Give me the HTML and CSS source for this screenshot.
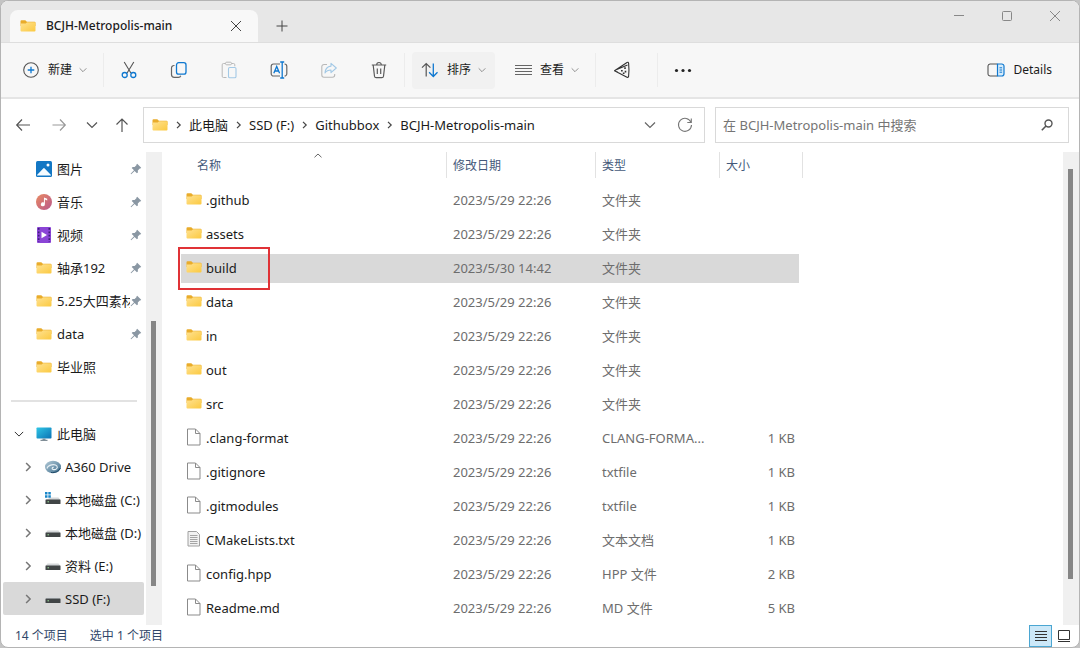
FILE: index.html
```html
<!DOCTYPE html>
<html lang="zh-CN">
<head>
    <meta charset="UTF-8">
    <meta name="viewport" content="width=device-width, initial-scale=1.0">
    <title>BCJH-Metropolis-main</title>
    <link rel="stylesheet" href="styles.css">
</head>
<body>
<!-- 公用图标 -->
<svg class="sprite" aria-hidden="true">
    <defs>
        <linearGradient id="gFolder" x1="0" y1="0" x2="1" y2="1">
            <stop offset="0" stop-color="#ffe292"/>
            <stop offset="1" stop-color="#fbc940"/>
        </linearGradient>
        <linearGradient id="gScreen" x1="0" y1="0" x2="1" y2="1">
            <stop offset="0" stop-color="#2fc6e6"/>
            <stop offset="1" stop-color="#0a72b4"/>
        </linearGradient>
        <linearGradient id="gMusic" x1="0" y1="0" x2="1" y2="1">
            <stop offset="0" stop-color="#e98a62"/>
            <stop offset="1" stop-color="#b9588c"/>
        </linearGradient>
        <linearGradient id="gDrive" x1="0" y1="0" x2="1" y2="1">
            <stop offset="0" stop-color="#b4cbd8"/>
            <stop offset="1" stop-color="#3c6c8c"/>
        </linearGradient>
    </defs>
    <symbol id="folder" viewBox="0 0 16 16">
        <path d="M.5 3.300a1 1 0 0 1 1-1h3.800l1.600 1.500h7.600a1 1 0 0 1 1 1V8H.5z" fill="#e9ac2b"/>
        <path d="M.5 5.600h5.200l1.400-1.300h7.400a1 1 0 0 1 1 1v7.200a1 1 0 0 1-1 1h-13a1 1 0 0 1-1-1z" fill="url(#gFolder)"/>
    </symbol>
    <symbol id="file" viewBox="0 0 16 18">
        <path d="M1.500 1h8L14 5.500V17H1.500z" fill="#fff" stroke="#8b8b8b"/>
        <path d="M9.500 1v4.500H14" fill="none" stroke="#8b8b8b"/>
    </symbol>
    <symbol id="text" viewBox="0 0 16 18">
        <path d="M2 1.500h8.500l3 3v11.500H2z" fill="#f1f1f1" stroke="#a0a0a0"/>
        <path d="M4 5.500h7.500M4 7.500h7.500M4 9.500h7.500M4 11.500h7.500M4 13.500h7.500" stroke="#909090" stroke-width=".8"/>
    </symbol>
    <symbol id="pin" viewBox="0 0 12 12">
        <path d="M7.200.8l4 4-.8.8-.6-.1-2 2 .1 1.900-1 .9-2.300-2.300L1.200 11.200.7 11l.1-.4 3.200-3.400L1.700 4.900l1-1 1.900.1 2-2-.2-.5z" fill="#8a97a3"/>
    </symbol>
    <symbol id="right" viewBox="0 0 8 8"><path d="M2.500.8L5.700 4 2.500 7.200" fill="none" stroke="currentColor" stroke-width="1.200"/></symbol>
    <symbol id="down" viewBox="0 0 12 12"><path d="M1 3.500l5 5 5-5" fill="none" stroke="currentColor" stroke-width="1.200"/></symbol>
    <symbol id="cross" viewBox="0 0 12 12"><path d="M1 1l10 10M11 1L1 11" fill="none" stroke="currentColor"/></symbol>
    <symbol id="disk" viewBox="0 0 16 16">
        <path d="M2.500 5.500h11L15.500 8H.5z" fill="#d5d8da"/>
        <rect x=".5" y="7.500" width="15" height="4.500" rx=".5" fill="#414546"/>
        <path d="M2.500 9.800h1.500" stroke="#9ce29a"/>
    </symbol>
</svg>

<div class="window">
    <!-- 标题栏 -->
    <header class="titlebar">
        <div class="tab">
            <svg class="icon"><use href="#folder"/></svg>
            <span class="tab-name">BCJH-Metropolis-main</span>
            <button class="tab-close" aria-label="关闭标签页"><svg class="icon-s"><use href="#cross"/></svg></button>
        </div>
        <button class="tab-add" aria-label="新建标签页">
            <svg class="icon-s" viewBox="0 0 12 12"><path d="M6 .5v11M.5 6h11" stroke="currentColor"/></svg>
        </button>
        <div class="win-btns">
            <button aria-label="最小化"><svg class="icon-s" viewBox="0 0 12 12"><path d="M1 5.500h10" stroke="currentColor"/></svg></button>
            <button aria-label="最大化"><svg class="icon-s" viewBox="0 0 12 12"><rect x="1.500" y="1.500" width="9" height="9" rx="1" fill="none" stroke="currentColor"/></svg></button>
            <button aria-label="关闭"><svg class="icon-s"><use href="#cross"/></svg></button>
        </div>
    </header>

    <!-- 工具栏 -->
    <div class="toolbar">
        <button class="tool new">
            <svg class="icon-l" viewBox="0 0 18 18" fill="none"><circle cx="9" cy="9" r="7.300" stroke="#555" stroke-width="1.100"/><path d="M9 5.700v6.600M5.700 9h6.600" stroke="#0f78d0" stroke-width="1.300"/></svg>
            <span>新建</span>
            <svg class="chev"><use href="#down"/></svg>
        </button>
        <i class="line"></i>
        <button class="tool only" aria-label="剪切">
            <svg class="icon-l" viewBox="0 0 18 18" fill="none"><path d="M4.200 1l6.700 11M13.800 1L7.100 12" stroke="#555" stroke-width="1.100"/><circle cx="4.700" cy="14" r="2.500" stroke="#0f78d0" stroke-width="1.300"/><circle cx="13.300" cy="14" r="2.500" stroke="#0f78d0" stroke-width="1.300"/></svg>
        </button>
        <button class="tool only" aria-label="复制">
            <svg class="icon-l" viewBox="0 0 18 18" fill="none"><path d="M4.500 4.500H4A2.500 2.500 0 0 0 1.500 7v6.500A2.800 2.800 0 0 0 4.300 16.300h4.200a2.500 2.500 0 0 0 2.300-1.600" stroke="#666" stroke-width="1.200"/><rect x="6.500" y="1.700" width="9.500" height="11.500" rx="2.200" stroke="#0f78d0" stroke-width="1.300"/></svg>
        </button>
        <button class="tool only" aria-label="粘贴" disabled>
            <svg class="icon-l" viewBox="0 0 18 18" fill="none"><path d="M5.500 2.500h-2a1.300 1.300 0 0 0-1.300 1.300v11.400a1.300 1.300 0 0 0 1.300 1.300h3M11.500 2.500h2a1.300 1.300 0 0 1 1.300 1.300v1.500" stroke="#b8b8b8"/><rect x="5.500" y="1.200" width="6" height="2.600" rx="1.200" stroke="#b8b8b8"/><rect x="8.500" y="6.500" width="7.500" height="10.200" rx="1.300" stroke="#a3c9e6" stroke-width="1.100"/></svg>
        </button>
        <button class="tool only" aria-label="重命名">
            <svg class="icon-l" viewBox="0 0 18 18" fill="none"><path d="M10 3H3.500A2.300 2.300 0 0 0 1.200 5.300v7.400A2.300 2.300 0 0 0 3.500 15H10M14.500 3a2.300 2.300 0 0 1 2.300 2.300v7.400a2.300 2.300 0 0 1-2.300 2.300" stroke="#666" stroke-width="1.200"/><path d="M10.200 1h4M10.200 17h4M12.200 1v16M3.800 12.300L6.700 5.500l2.900 6.800M4.800 10h3.800" stroke="#0f78d0" stroke-width="1.300"/></svg>
        </button>
        <button class="tool only" aria-label="共享" disabled>
            <svg class="icon-l" viewBox="0 0 18 18" fill="none"><path d="M7 3.500H4A2.200 2.200 0 0 0 1.800 5.700V14A2.200 2.200 0 0 0 4 16.200h8.500a2.200 2.200 0 0 0 2.200-2.200v-1" stroke="#b8b8b8" stroke-width="1.100"/><path d="M11 2.300l5.300 4.700L11 11.600V9c-2.800 0-4.600.8-6 3 .2-3.800 2.300-6.500 6-6.900z" stroke="#a3c9e6" stroke-width="1.100" stroke-linejoin="round"/></svg>
        </button>
        <button class="tool only" aria-label="删除">
            <svg class="icon-l" viewBox="0 0 18 18" fill="none" stroke="#5a5a5a" stroke-width="1.200"><path d="M1.800 4h14.400M6.700 3.800a2.300 2.300 0 0 1 4.600 0M3.200 4.200l1.300 11a1.700 1.700 0 0 0 1.700 1.500h5.600a1.700 1.700 0 0 0 1.700-1.500l1.300-11M7.300 7.500v5.500M10.700 7.500v5.500"/></svg>
        </button>
        <i class="line"></i>
        <button class="tool sort">
            <svg class="icon-l" viewBox="0 0 18 18" fill="none"><path d="M5.200 15.500V2.500M1 6.700l4.200-4.200 4.200 4.200" stroke="#555" stroke-width="1.200"/><path d="M12.300 2.500v13M8.100 11.300l4.200 4.200 4.200-4.200" stroke="#0f78d0" stroke-width="1.300"/></svg>
            <span>排序</span>
            <svg class="chev"><use href="#down"/></svg>
        </button>
        <button class="tool view">
            <svg class="icon-l" viewBox="0 0 18 18"><path d="M1 4.500h17M1 7.500h17M1 10.500h17M1 13.500h17" stroke="#666"/></svg>
            <span>查看</span>
            <svg class="chev"><use href="#down"/></svg>
        </button>
        <i class="line"></i>
        <button class="tool only pizza" aria-label="Pizza">
            <svg class="icon-l" viewBox="0 0 18 18" fill="none" stroke="#333" stroke-width="1.100" stroke-linejoin="round"><path d="M1.500 9.800L14 1.500q1.300-.7 1.600.6.700 6.500 0 13.200-.3 1.400-1.600 1zM3.200 8.700L14.500 4M3.500 10.500l1.500 1"/><path d="M12 6.300v1.700M8 9.800h1.700M12.500 9.800v1.700M9.800 12.300h1.700" stroke-width="1.600"/></svg>
        </button>
        <i class="line"></i>
        <button class="tool only" aria-label="更多">
            <svg class="icon-l" viewBox="0 0 18 18" fill="#222"><circle cx="2.500" cy="9.500" r="1.600"/><circle cx="9" cy="9.500" r="1.600"/><circle cx="15.500" cy="9.500" r="1.600"/></svg>
        </button>
        <button class="tool details">
            <svg class="icon-l" viewBox="0 0 18 18" fill="none"><path d="M10.500 3H3.200A2.200 2.200 0 0 0 1 5.200v7.600A2.200 2.200 0 0 0 3.200 15h7.300" stroke="#555" stroke-width="1.100"/><path d="M10.500 3h4.300A2.200 2.200 0 0 1 17 5.200v7.600a2.200 2.200 0 0 1-2.200 2.200h-4.300z" fill="#d6ecfb" stroke="#0f78d0" stroke-width="1.200"/><path d="M12.500 6.800h2.600M12.500 9h2.600M12.500 11.200h2.600" stroke="#0f78d0"/></svg>
            <span>Details</span>
        </button>
    </div>

    <!-- 地址栏 -->
    <div class="nav">
        <button class="nav-btn" aria-label="后退"><svg class="icon" viewBox="0 0 16 16"><path d="M15 8H2M7 2.500L1.700 8 7 13.500" fill="none" stroke="#555" stroke-width="1.200"/></svg></button>
        <button class="nav-btn" aria-label="前进"><svg class="icon" viewBox="0 0 16 16"><path d="M1.500 8h13M9 2.500L14.300 8 9 13.500" fill="none" stroke="#999" stroke-width="1.200"/></svg></button>
        <button class="nav-btn small" aria-label="最近浏览的位置"><svg class="icon-s"><use href="#down"/></svg></button>
        <button class="nav-btn small" aria-label="上移"><svg class="icon" viewBox="0 0 16 16"><path d="M8 15V2M2.500 7.500L8 2l5.500 5.500" fill="none" stroke="#555" stroke-width="1.200"/></svg></button>
        <div class="address">
            <svg class="icon"><use href="#folder"/></svg>
            <svg class="sep"><use href="#right"/></svg>
            <a href="#">此电脑</a>
            <svg class="sep"><use href="#right"/></svg>
            <a href="#">SSD (F:)</a>
            <svg class="sep"><use href="#right"/></svg>
            <a href="#">Githubbox</a>
            <svg class="sep"><use href="#right"/></svg>
            <a href="#">BCJH-Metropolis-main</a>
            <button class="drop" aria-label="以前的位置"><svg class="icon-s"><use href="#down"/></svg></button>
            <button class="refresh" aria-label="刷新"><svg class="icon" viewBox="0 0 16 16"><path d="M14 5.300A6.500 6.500 0 1 0 14.500 8M14.300 1.500v4h-4" fill="none" stroke="#777" stroke-width="1.100"/></svg></button>
        </div>
        <label class="search">
            <input type="text" placeholder="在 BCJH-Metropolis-main 中搜索" aria-label="搜索">
            <svg class="icon-s" viewBox="0 0 12 12"><circle cx="7.500" cy="4.500" r="3.500" fill="none" stroke="#555" stroke-width="1.400"/><path d="M5 7L.8 11.200" stroke="#555" stroke-width="1.600"/></svg>
        </label>
    </div>

    <div class="main">
        <!-- 左侧导航 -->
        <nav class="side">
            <a class="item" href="#">
                <svg class="icon" viewBox="0 0 16 16"><rect width="16" height="16" rx="1.500" fill="#1377c4"/><path d="M1 14l6.200-6.500a1 1 0 0 1 1.500 0L15 14v.5H1z" fill="#f5fbff"/><circle cx="12" cy="4" r="1.500" fill="#fff"/></svg>
                <span>图片</span><svg class="pin"><use href="#pin"/></svg>
            </a>
            <a class="item" href="#">
                <svg class="icon" viewBox="0 0 16 16"><circle cx="8" cy="8" r="8" fill="url(#gMusic)"/><path d="M8 3.500l3.200 1.200v1.700L8.900 5.600v4.700a2 2 0 1 1-1-1.700z" fill="#fff"/></svg>
                <span>音乐</span><svg class="pin"><use href="#pin"/></svg>
            </a>
            <a class="item" href="#">
                <svg class="icon" viewBox="0 0 16 16"><rect x="1" width="14" height="16" rx="1" fill="#8b45d6"/><path d="M2.700 1v14M13.300 1v14" stroke="#3e1e78" stroke-width="1.600" stroke-dasharray="1.800 1.600"/><path d="M5.500 4.700v6.600L11 8z" fill="#fff"/></svg>
                <span>视频</span><svg class="pin"><use href="#pin"/></svg>
            </a>
            <a class="item" href="#"><svg class="icon"><use href="#folder"/></svg><span>轴承192</span><svg class="pin"><use href="#pin"/></svg></a>
            <a class="item" href="#"><svg class="icon"><use href="#folder"/></svg><span>5.25大四素材</span><svg class="pin"><use href="#pin"/></svg></a>
            <a class="item" href="#"><svg class="icon"><use href="#folder"/></svg><span>data</span><svg class="pin"><use href="#pin"/></svg></a>
            <a class="item" href="#"><svg class="icon"><use href="#folder"/></svg><span>毕业照</span></a>
            <hr>
            <a class="item root" href="#">
                <svg class="arrow open"><use href="#down"/></svg>
                <svg class="icon" viewBox="0 0 16 16"><rect x=".5" y="1.500" width="15" height="11" rx=".8" fill="url(#gScreen)"/><path d="M6.500 12.500h3V14h-3z" fill="#8296a3"/><path d="M4.500 14.300h7" stroke="#61727d"/></svg>
                <span>此电脑</span>
            </a>
            <a class="item sub" href="#">
                <svg class="arrow"><use href="#right"/></svg>
                <svg class="icon" viewBox="0 0 16 16"><ellipse cx="8" cy="8" rx="8" ry="6.200" fill="url(#gDrive)"/><path d="M2 9.500c1-4 8-5 10-2.300 1.300 2-1.500 4-4 3.200-1.500-.6-1-2.200.7-2" fill="none" stroke="#e6eff4" stroke-width="1.100"/><path d="M6 13.500c4 .5 8-1.300 9.300-4.500" fill="none" stroke="#214b69"/></svg>
                <span>A360 Drive</span>
            </a>
            <a class="item sub" href="#">
                <svg class="arrow"><use href="#right"/></svg>
                <svg class="icon" viewBox="0 0 16 16"><path d="M5.500 5.500h8L15.500 8H.5z" fill="#d5d8da"/><rect x=".5" y="7.500" width="15" height="4.500" rx=".5" fill="#414546"/><path d="M2.500 9.800h1.500" stroke="#9ce29a"/><path d="M0 0h2.500v2.500H0zM3.300 0h2.500v2.500H3.300zM0 3.300h2.500v2.500H0zM3.300 3.300h2.500v2.500H3.300z" fill="#1a86c8"/></svg>
                <span>本地磁盘 (C:)</span>
            </a>
            <a class="item sub" href="#"><svg class="arrow"><use href="#right"/></svg><svg class="icon"><use href="#disk"/></svg><span>本地磁盘 (D:)</span></a>
            <a class="item sub" href="#"><svg class="arrow"><use href="#right"/></svg><svg class="icon"><use href="#disk"/></svg><span>资料 (E:)</span></a>
            <a class="item sub active" href="#"><svg class="arrow"><use href="#right"/></svg><svg class="icon"><use href="#disk"/></svg><span>SSD (F:)</span></a>
        </nav>
        <div class="scroll side-scroll"><div class="thumb"></div></div>

        <!-- 文件列表 -->
        <div class="files">
            <table>
                <thead>
                <tr>
                    <th class="name">名称<svg class="caret" viewBox="0 0 8 5"><path d="M.5 4.300L4 1l3.500 3.300" fill="none" stroke="#666"/></svg></th>
                    <th class="date">修改日期</th>
                    <th class="type">类型</th>
                    <th class="size">大小</th>
                </tr>
                </thead>
                <tbody>
                <tr><td><svg class="icon"><use href="#folder"/></svg>.github</td><td>2023/5/29 22:26</td><td>文件夹</td><td></td></tr>
                <tr><td><svg class="icon"><use href="#folder"/></svg>assets</td><td>2023/5/29 22:26</td><td>文件夹</td><td></td></tr>
                <tr class="selected"><td><svg class="icon"><use href="#folder"/></svg>build<i class="mark"></i></td><td>2023/5/30 14:42</td><td>文件夹</td><td></td></tr>
                <tr><td><svg class="icon"><use href="#folder"/></svg>data</td><td>2023/5/29 22:26</td><td>文件夹</td><td></td></tr>
                <tr><td><svg class="icon"><use href="#folder"/></svg>in</td><td>2023/5/29 22:26</td><td>文件夹</td><td></td></tr>
                <tr><td><svg class="icon"><use href="#folder"/></svg>out</td><td>2023/5/29 22:26</td><td>文件夹</td><td></td></tr>
                <tr><td><svg class="icon"><use href="#folder"/></svg>src</td><td>2023/5/29 22:26</td><td>文件夹</td><td></td></tr>
                <tr><td><svg class="icon doc"><use href="#file"/></svg>.clang-format</td><td>2023/5/29 22:26</td><td>CLANG-FORMA...</td><td>1 KB</td></tr>
                <tr><td><svg class="icon doc"><use href="#file"/></svg>.gitignore</td><td>2023/5/29 22:26</td><td>txtfile</td><td>1 KB</td></tr>
                <tr><td><svg class="icon doc"><use href="#file"/></svg>.gitmodules</td><td>2023/5/29 22:26</td><td>txtfile</td><td>1 KB</td></tr>
                <tr><td><svg class="icon doc"><use href="#text"/></svg>CMakeLists.txt</td><td>2023/5/29 22:26</td><td>文本文档</td><td>1 KB</td></tr>
                <tr><td><svg class="icon doc"><use href="#file"/></svg>config.hpp</td><td>2023/5/29 22:26</td><td>HPP 文件</td><td>2 KB</td></tr>
                <tr><td><svg class="icon doc"><use href="#file"/></svg>Readme.md</td><td>2023/5/29 22:26</td><td>MD 文件</td><td>5 KB</td></tr>
                </tbody>
            </table>
        </div>
        <div class="scroll file-scroll"><div class="thumb"></div></div>
    </div>

    <!-- 状态栏 -->
    <footer class="status">
        <span>14 个项目</span>
        <span>选中 1 个项目</span>
        <div class="modes">
            <button class="mode on" aria-label="详细信息"><svg class="icon" viewBox="0 0 16 16"><path d="M2 3.500h12M2 6.500h12M2 9.500h12M2 12.500h12" stroke="#333"/></svg></button>
            <button class="mode" aria-label="大图标"><svg class="icon" viewBox="0 0 16 16"><path d="M2.500 2.500h11v9h-11zM2 13.500h12" fill="none" stroke="#333"/></svg></button>
        </div>
    </footer>
</div>
</body>
</html>
```
FILE: styles.css
```css
* {
    margin: 0;
    padding: 0;
    box-sizing: border-box;
}

body {
    background-color: #c4c4c4;
    font: 13px/20px "Noto Sans", "Noto Sans CJK SC", sans-serif;
    color: #1b1b1b;
}

button {
    border: none;
    background: none;
    font: inherit;
    color: inherit;
    display: flex;
    align-items: center;
    justify-content: center;
}

a {
    color: inherit;
    text-decoration: none;
}

svg {
    display: block;
    flex: none;
}

.sprite {
    position: absolute;
    width: 0;
    height: 0;
}

/*图标尺寸*/
.icon {
    width: 16px;
    height: 16px;
}

.icon-s {
    width: 12px;
    height: 12px;
}

.icon-l {
    width: 18px;
    height: 18px;
}

.window {
    min-height: 100vh;
    display: flex;
    flex-direction: column;
    background-color: #fff;
    border: 1px solid #b4b4b4;
    border-radius: 8px;
    overflow: hidden;
}

/*标题栏*/
.titlebar {
    display: flex;
    height: 41px;
    padding-left: 9px;
    background-color: #e7e7e7;
    color: #444;
}

.tab {
    display: flex;
    align-items: center;
    width: 248px;
    margin-top: 9px;
    padding: 0 10px;
    background-color: #f8f8f8;
    border-radius: 8px 8px 0 0;
}

.tab-name {
    flex: 1;
    margin-left: 10px;
    font-size: 12px;
    font-weight: 500;
    color: #1b1b1b;
}

.tab-close {
    width: 24px;
    height: 24px;
}

.tab-add {
    width: 48px;
    margin-top: 9px;
}

.win-btns {
    display: flex;
    margin-left: auto;
    color: #888;
}

.win-btns button {
    width: 48px;
    height: 30px;
}

/*工具栏*/
.toolbar {
    display: flex;
    align-items: center;
    height: 57px;
    padding: 0 18px 0 12px;
    background-color: #f7f7f7;
    border-top: 1px solid #dedede;
    border-bottom: 2px solid #e5e5e5;
    font-size: 12px;
}

.tool {
    height: 37px;
    padding: 0 9px;
    border-radius: 4px;
}

.tool span {
    margin-left: 8px;
}

.tool.only {
    width: 50px;
}

.chev {
    width: 8px;
    height: 8px;
    margin-left: 7px;
    color: #777;
}

.line {
    width: 1px;
    height: 34px;
    background-color: #ececec;
}

.new {
    margin-right: 7px;
}

.sort {
    margin: 0 10px 0 7px;
    background-color: #f1f1f1;
}

.view {
    margin-right: 7px;
}

.pizza {
    margin: 0 10px 0 1px;
}

.details {
    margin-left: auto;
}

/*地址栏*/
.nav {
    display: flex;
    padding: 8px 10px 9px 4px;
}

.nav-btn {
    width: 36px;
    color: #555;
}

.nav-btn.small {
    width: 30px;
}

.address,
.search {
    display: flex;
    align-items: center;
    height: 36px;
    border: 1px solid #d9d9d9;
}

.address {
    flex: 542 1 0;
    margin: 0 10px 0 6px;
    padding: 0 7px 0 8px;
}

.sep {
    width: 21px;
    height: 8px;
    color: #444;
}

.drop {
    width: 24px;
    height: 24px;
    margin-left: auto;
    color: #666;
}

.refresh {
    width: 24px;
    height: 24px;
    margin-left: 11px;
}

.search {
    flex: 328 1 0;
    padding: 0 15px 0 7px;
}

.search input {
    flex: 1;
    min-width: 0;
    border: none;
    outline: none;
    font: inherit;
    background: none;
}

.search input::placeholder {
    color: #757575;
}

.main {
    flex: 1;
    display: flex;
}

/*左侧导航*/
.side {
    width: 145px;
    padding: 0 2px;
}

.item {
    display: flex;
    align-items: center;
    height: 33px;
    padding-left: 33px;
    border-radius: 2px;
}

.item span {
    flex: 1;
    min-width: 0;
    margin-left: 5px;
    overflow: hidden;
    white-space: nowrap;
}

.pin {
    width: 12px;
    height: 12px;
    margin-right: 2px;
}

.side hr {
    height: 2px;
    margin: 17px 7px 15px 8px;
    border: none;
    background-color: #e2e2e2;
}

.arrow {
    width: 10px;
    height: 10px;
    color: #777;
}

.root {
    padding-left: 11px;
}

.root .arrow {
    margin-right: 12px;
    color: #333;
}

.sub {
    padding-left: 20px;
}

.sub .arrow {
    margin-right: 12px;
}

.sub span {
    margin-left: 4px;
}

.active {
    background-color: #d9d9d9;
}

/*滚动条*/
.scroll {
    width: 16px;
    background-color: #f0f0f0;
}

.thumb {
    width: 5px;
    margin-left: 5px;
    background-color: #868686;
}

.side-scroll .thumb {
    height: 265px;
    margin-top: 169px;
}

.file-scroll .thumb {
    height: 410px;
    margin-top: 17px;
}

/*文件列表*/
.files {
    flex: 1;
    padding-left: 19px;
}

table {
    width: 622px;
    table-layout: fixed;
    border-spacing: 0;
}

th {
    height: 31px;
    padding: 0 0 4px 6px;
    text-align: left;
    font-size: 12px;
    font-weight: normal;
    color: #44597a;
    /*列之间的分隔线*/
    background: linear-gradient(#e2e2e2, #e2e2e2) right top / 1px 26px no-repeat;
}

.name {
    position: relative;
    width: 266px;
    padding-left: 16px;
}

.date {
    width: 149px;
}

.type {
    width: 124px;
}

.size {
    width: 83px;
}

/*排序箭头在表头文字上方*/
.caret {
    position: absolute;
    top: 1px;
    left: 50%;
    width: 8px;
    height: 5px;
}

td {
    height: 34px;
    padding-left: 6px;
    color: #6d6d6d;
    white-space: nowrap;
}

td:first-child {
    position: relative;
    padding-left: 5px;
    color: #1b1b1b;
}

td:last-child {
    padding-right: 8px;
    text-align: right;
}

td .icon {
    display: inline-block;
    margin-right: 4px;
    vertical-align: -2px;
}

td .doc {
    height: 18px;
    vertical-align: -3px;
}

.selected td {
    background: linear-gradient(#d9d9d9, #d9d9d9) left center / 100% 29px no-repeat;
}

.selected td:last-child {
    background-size: calc(100% - 4px) 29px;
}

/*红色标记框*/
.mark {
    position: absolute;
    top: -4px;
    left: -3px;
    width: 92px;
    height: 43px;
    border: 2px solid #e03236;
}

/*状态栏*/
.status {
    display: flex;
    align-items: center;
    gap: 22px;
    height: 22px;
    padding: 0 4px 0 14px;
    font-size: 12px;
    color: #2f4668;
}

.modes {
    display: flex;
    align-self: stretch;
    margin-left: auto;
}

.mode {
    width: 23px;
}

.mode.on {
    background-color: #cce8f8;
    border: 1px solid #4ba6d2;
}
```
